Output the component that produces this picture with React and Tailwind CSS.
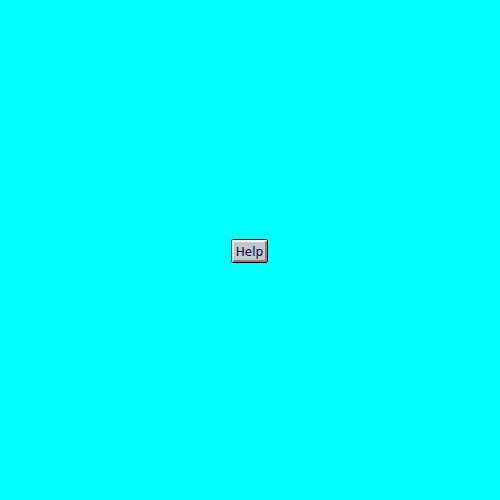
export default function App() {
  return (
    <main className="flex min-h-screen items-center justify-center bg-[#00ffff] pt-0.5">
      <button
        type="button"
        className="mr-px rounded-xs border border-black bg-[#c6c6c6] font-['DejaVu_Sans',sans-serif] text-xs text-[#000066]"
      >
        <span className="block border-2 border-t-white border-r-[#808080] border-b-[#808080] border-l-white px-0.5 pt-0.5">
          Help
        </span>
      </button>
    </main>
  );
}
